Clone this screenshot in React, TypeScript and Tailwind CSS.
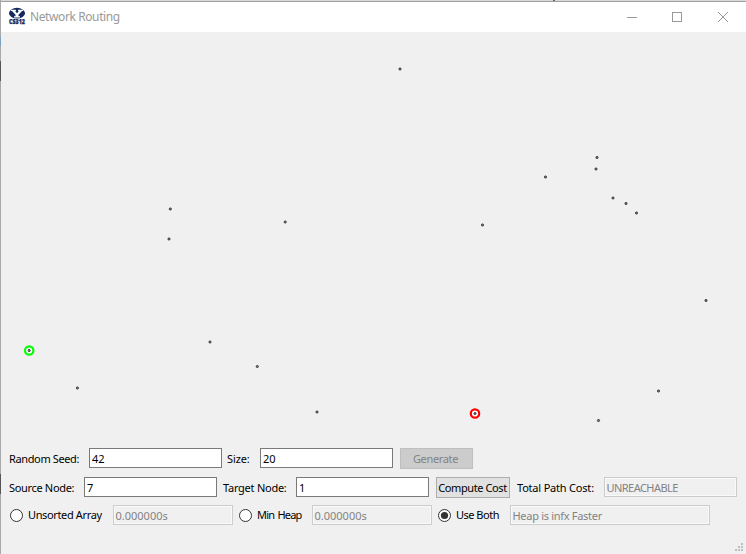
import type { ReactNode } from "react";

const points: [number, number][] = [
  [400, 69], [597, 157.5], [596, 169], [545.5, 177], [613, 198], [626, 203.5], [636.5, 213],
  [170.3, 209], [169, 239], [285.2, 222], [482.5, 225], [706, 300.5], [210, 342], [257.3, 366.5],
  [77.4, 388], [317, 412], [658.5, 391], [598.5, 420.5], [29.2, 350.5], [475, 413.5],
];

function Label({ className, children }: { className: string; children: ReactNode }) {
  return <span className={`block shrink-0 whitespace-nowrap ${className}`}>{children}</span>;
}

function Field({ value, className }: { value: string; className: string }) {
  return (
    <div className={`h-5 shrink-0 whitespace-nowrap border leading-[20px] ${className}`}>
      {value}
    </div>
  );
}

const on = "border-[#7a7a7a] bg-white pl-[2px]";
const off = "border-[#cccccc] bg-[#f0f0f0] pl-[1.5px] text-[#838383] shadow-[inset_0_0_0_1px_#fafafa]";

function Radio({ checked = false }: { checked?: boolean }) {
  return (
    <svg className="block h-[13px] w-[13px] shrink-0" viewBox="0 0 13 13">
      <circle cx="6.5" cy="6.5" r="6" fill="#fff" stroke="#333" />
      {checked && <circle cx="6.5" cy="6.5" r="3.6" fill="#333" />}
    </svg>
  );
}

function WindowEdge() {
  return (
    <div className="flex w-px shrink-0 flex-col bg-[#a9a9a9]">
      <div className="mt-[37px] h-[9px] bg-[#7ba3c4]" />
      <div className="mt-[15px] h-5 bg-[#555]" />
      <div className="mt-[393px] h-5 bg-[#555]" />
    </div>
  );
}

export default function App() {
  return (
    <div className="flex h-[554px] w-[746px] overflow-hidden bg-[#f0f0f0] font-['Noto_Sans','Open_Sans',sans-serif] text-[11px] text-black">
      <WindowEdge />
      <div className="flex w-[745px] flex-col">
        <div className="flex h-px shrink-0 bg-[#d9d9d9]">
          <div className="ml-[552px] w-[2px] bg-[#666]" />
        </div>
        <div className="flex h-[31px] shrink-0 items-center border-t border-[#a0a0a0] bg-white pl-2">
          <svg className="block h-[18px] w-4 shrink-0 overflow-visible" viewBox="0 0 16 18">
            <ellipse cx="8" cy="5.200" rx="8" ry="5.400" fill="#14295c" />
            <path d="M2 1.800h4.900v1.300h-.8L8 5.300l1.900-2.200h-.8V1.800H14v1.300h-1L9.500 6.700v1.500h1.500v1.400H5V8.200h1.500V6.700L3 3.100H2z" fill="#fff" />
            <text x="0" y="16" textLength="16" lengthAdjust="spacingAndGlyphs" fontSize="6" fontWeight="900" fill="#14295c" stroke="#14295c" strokeWidth="0.250">CS312</text>
          </svg>
          <span className="ml-[5px] text-[12px] leading-5 tracking-[-0.4px] text-[#999]">Network Routing</span>
          <svg className="ml-auto mr-[17px] block h-3 w-[102px]" viewBox="0 0 102 12" fill="none" stroke="#999" shapeRendering="crispEdges">
            <path d="M0 6.500h10M45.500 1.500h9v9h-9z" />
            <path d="M91 1l10 10m0-10l-10 10" shapeRendering="auto" />
          </svg>
        </div>
        <svg className="block h-[416px] w-[745px] shrink-0" viewBox="1 32 745 416">
          <circle cx="29.2" cy="350.500" r="4.200" fill="#fff" stroke="#00ff00" strokeWidth="2.200" />
          <circle cx="475" cy="413.500" r="4.200" fill="#fff" stroke="#ff0000" strokeWidth="2.200" />
          {points.map(([x, y]) => (
            <circle key={`${x}-${y}`} cx={x} cy={y} r="1.100" fill="#777" stroke="#333" strokeWidth="0.900" />
          ))}
        </svg>
        <div className="flex h-[29px] shrink-0 items-start pl-2">
          <Label className="w-20 leading-[22px] tracking-[-0.37px]">Random Seed:</Label>
          <Field value="42" className={`w-[133px] ${on}`} />
          <Label className="ml-[5px] w-[33px] leading-[22px] tracking-[-0.1px]">Size:</Label>
          <Field value="20" className={`w-[133px] ${on}`} />
          <div className="ml-[7px] h-[21px] w-[73px] border border-[#bfbfbf] bg-[#cccccc] pr-[2px] text-center leading-[20px] tracking-[-0.35px] text-[#838383]">Generate</div>
        </div>
        <div className="flex h-7 shrink-0 items-start pl-2">
          <Label className="w-[75px] leading-[22px] tracking-[-0.33px]">Source Node:</Label>
          <Field value="7" className={`w-[133px] ${on}`} />
          <Label className="ml-[6px] w-[73px] leading-[22px] tracking-[-0.25px]">Target Node:</Label>
          <Field value="1" className={`w-[133px] ${on}`} />
          <div className="ml-[7px] h-[21px] w-[74px] whitespace-nowrap border border-[#adadad] bg-[#e1e1e1] pr-px text-center leading-[20px] tracking-[-0.4px]">Compute Cost</div>
          <Label className="ml-[7px] w-[87px] leading-[22px] tracking-[-0.2px]">Total Path Cost:</Label>
          <Field value="UNREACHABLE" className={`w-[133px] tracking-[-0.55px] ${off}`} />
        </div>
        <div className="flex h-5 shrink-0 items-center pl-[9px]">
          <Radio />
          <Label className="ml-[5px] w-[85px] leading-5 tracking-[-0.36px]">Unsorted Array</Label>
          <Field value="0.000000s" className={`w-[120px] ${off}`} />
          <div className="ml-[6px]"><Radio /></div>
          <Label className="ml-[5px] w-[55px] leading-5 tracking-[-0.8px] [word-spacing:1.2px]">Min Heap</Label>
          <Field value="0.000000s" className={`w-[120px] ${off}`} />
          <div className="ml-[6px]"><Radio checked /></div>
          <Label className="ml-[5px] w-[54px] leading-5 tracking-[-0.5px]">Use Both</Label>
          <Field value="Heap is infx Faster" className={`w-[200px] tracking-[-0.3px] ${off}`} />
        </div>
        <svg className="ml-auto mr-[2px] mt-[18px] block h-[9px] w-[9px]" viewBox="0 0 9 9" fill="#bfbfbf">
          <path d="M6 0h2v2H6zM3 3h2v2H3zM6 3h2v2H6zM0 6h2v2H0zM3 6h2v2H3zM6 6h2v2H6z" />
        </svg>
      </div>
    </div>
  );
}
